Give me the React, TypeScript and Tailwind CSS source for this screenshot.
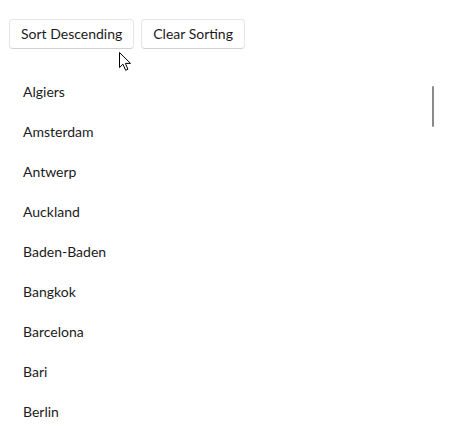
import React from "react";

const cities = ["Algiers", "Amsterdam", "Antwerp", "Auckland", "Baden-Baden", "Bangkok", "Barcelona", "Bari", "Berlin"];

export default function App() {
  return (
    <div className="relative w-[452px] h-[440px] overflow-hidden bg-white text-[#1b1b1b] text-[14px]" style={{ fontFamily: 'Lato, "Noto Sans", sans-serif' }}>
      <div className="flex gap-[7px] pl-[9px] pt-[19px]">
        <button className="h-[30px] px-[11px] rounded-[4px] border border-[#e5e5e5] border-b-[#d0d0d0] bg-white leading-none">Sort Descending</button>
        <button className="h-[30px] px-[11px] rounded-[4px] border border-[#e5e5e5] border-b-[#d0d0d0] bg-white leading-none">Clear Sorting</button>
      </div>
      <div className="relative mt-[22px] flex">
        <ul className="flex-1 flex flex-col">
          {cities.map((c) => (
            <li key={c} className="h-[40px] flex items-center pl-[23px]">{c}</li>
          ))}
        </ul>
        <div className="absolute left-[432px] top-[15px] w-[2px] h-[41px] rounded-full bg-[#8a8a8a]" />
      </div>
      <svg className="absolute left-[119px] top-[52px]" width="13" height="20" viewBox="0 0 13 20">
        <path d="M0.5 0.5 L0.5 15.5 L4 12.2 L6.6 18.3 L8.9 17.3 L6.4 11.4 L11.5 11.4 Z" fill="white" stroke="black" strokeWidth="1" strokeLinejoin="round" />
      </svg>
    </div>
  );
}
